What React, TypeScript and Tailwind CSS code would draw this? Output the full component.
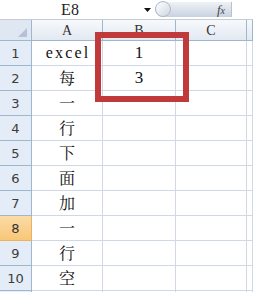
import React from 'react'

const rows: { n: number; a: string; b?: string }[] = [
  { n: 1, a: 'excel', b: '1' },
  { n: 2, a: '每', b: '3' },
  { n: 3, a: '一' },
  { n: 4, a: '行' },
  { n: 5, a: '下' },
  { n: 6, a: '面' },
  { n: 7, a: '加' },
  { n: 8, a: '一' },
  { n: 9, a: '行' },
  { n: 10, a: '空' },
  { n: 11, a: '' },
]

function FormulaBar() {
  return (
    <div className="flex h-[20px] border-b border-[#c5ccd6] bg-white">
      <div className="flex w-[140px] items-center justify-center pt-[1px] font-['Liberation_Serif',serif] text-[16px] leading-none text-[#222]">
        E8
      </div>
      <div className="flex w-[15px] items-center justify-center">
        <svg width="7" height="4" viewBox="0 0 7 4">
          <path d="M0 0h7L3.5 4z" fill="#111" />
        </svg>
      </div>
      <div className="relative my-[2px] flex w-[77px] items-center justify-end rounded-l-full border-r border-[#b9c3d0] bg-gradient-to-b from-[#eef2f7] to-[#c8d2df] pr-[6px]">
        <div className="absolute left-0 top-[-1px] h-[16px] w-[16px] rounded-full border border-[#aeb9c8] bg-gradient-to-br from-[#ffffff] to-[#cfd8e3]" />
        <span className="font-['Liberation_Serif',serif] text-[13px] italic leading-none text-[#444]">
          f<span className="text-[10px]">x</span>
        </span>
      </div>
      <div className="flex-1" />
    </div>
  )
}

function HeaderRow() {
  const head = "flex items-center justify-center border-r border-b border-[#9eb6ce] bg-gradient-to-b from-[#f7f9fc] to-[#e3e9f2] font-['Liberation_Serif',serif] text-[14px] text-[#333]"
  return (
    <div className="flex h-[21px]">
      <div className="relative w-[32px] border-r border-b border-[#9eb6ce] bg-[#dfe7f2]">
        <svg className="absolute bottom-[3px] right-[4px]" width="9" height="9" viewBox="0 0 9 9">
          <path d="M9 0v9H0z" fill="#b4c2d4" />
        </svg>
      </div>
      <div className={`${head} w-[71px]`}>A</div>
      <div className={`${head} w-[73px]`}>B</div>
      <div className={`${head} w-[71px]`}>C</div>
      <div className={`${head} flex-1`} />
    </div>
  )
}

export default function App() {
  return (
    <div className="relative h-[292px] w-[253px] overflow-hidden bg-white">
      <FormulaBar />
      <HeaderRow />
      {rows.map((r) => {
        const sel = r.n === 8
        const cell = 'flex items-center justify-center border-r border-b border-[#d0d7e5]'
        const isLatin = /^[a-z]/.test(r.a)
        return (
          <div key={r.n} className="flex h-[25px]">
            <div
              className={`flex w-[32px] items-center justify-center border-b border-r pt-[2px] font-['DejaVu_Sans',sans-serif] text-[13px] ${
                sel
                  ? 'border-[#e8b25f] bg-gradient-to-b from-[#fbdba6] to-[#f8c777] text-[#333]'
                  : 'border-[#9eb6ce] bg-[#e4ecf7] text-[#3c3c3c]'
              }`}
            >
              {r.n < 11 ? r.n : ''}
            </div>
            <div
              className={`${cell} w-[71px] text-[#111] ${
                isLatin
                  ? "pl-[2px] font-['Liberation_Serif',serif] text-[16px] tracking-[2.2px]"
                  : "font-['Noto_Serif_CJK_SC','Noto_Sans_CJK_SC',serif] text-[16px]"
              }`}
            >
              {r.a}
            </div>
            <div className={`${cell} w-[73px] font-['Liberation_Serif',serif] text-[17px] text-[#111]`}>
              {r.b}
            </div>
            <div className={`${cell} w-[71px]`} />
            <div className={`${cell} flex-1`} />
          </div>
        )
      })}
      <div className="absolute left-[95px] top-[32px] h-[70px] w-[94px] border-[6px] border-[#c03a3c]" />
    </div>
  )
}
